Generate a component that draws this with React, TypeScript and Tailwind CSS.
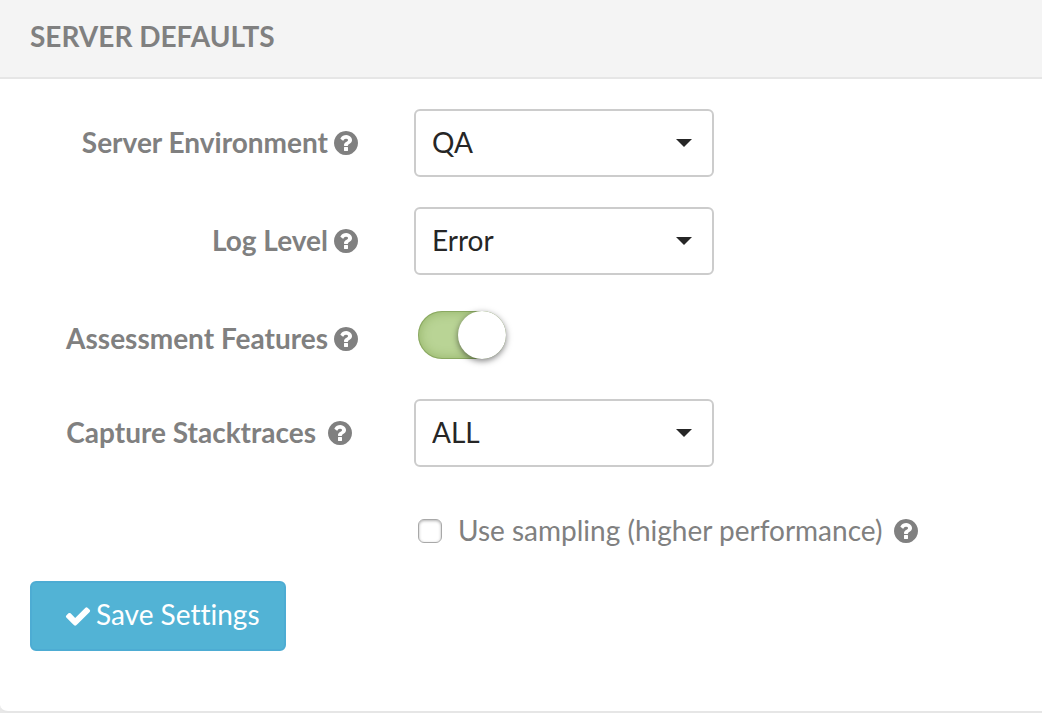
import React, { useState } from "react";

function HelpIcon() {
  return (
    <svg viewBox="128 128 1536 1536" className="size-6 shrink-0" fill="currentColor" aria-hidden="true">
      <path d="M1024 1376v-192q0-14-9-23t-23-9h-192q-14 0-23 9t-9 23v192q0 14 9 23t23 9h192q14 0 23-9t9-23zm256-672q0-88-55.5-163t-138.5-116-170-41q-243 0-371 213-15 24 8 42l132 100q7 6 19 6 16 0 25-12 53-68 86-92 34-24 86-24 48 0 85.5 26t37.5 59q0 38-20 61t-68 45q-63 28-115.5 86.5t-52.5 125.5v36q0 14 9 23t23 9h192q14 0 23-9t9-23q0-19 21.5-49.5t54.5-49.5q32-18 49-28.5t46-35 44.5-48 28-60.5 12.5-81zm384 192q0 209-103 385.5t-279.5 279.5-385.5 103-385.5-103-279.5-279.5-103-385.5 103-385.5 279.5-279.5 385.5-103 385.5 103 279.5 279.5 103 385.5z" />
    </svg>
  );
}

function CheckIcon() {
  return (
    <svg viewBox="0 0 1792 1792" className="size-7 shrink-0" fill="currentColor" aria-hidden="true">
      <path d="M1671 566q0 40-28 68l-724 724-136 136q-28 28-68 28t-68-28l-136-136-362-362q-28-28-28-68t28-68l136-136q28-28 68-28t68 28l294 295 656-657q28-28 68-28t68 28l136 136q28 28 28 68z" />
    </svg>
  );
}

function LabelCell({ htmlFor, text, spaced = false }: { htmlFor: string; text: string; spaced?: boolean }) {
  return (
    <div
      className={
        spaced
          ? "flex h-[68px] w-[328px] shrink-0 items-center justify-end gap-3 pr-1.5"
          : "flex h-[68px] w-[328px] shrink-0 items-center justify-end gap-1.5"
      }
    >
      <label htmlFor={htmlFor} className="pb-0.5 font-bold whitespace-nowrap">
        {text}
      </label>
      <HelpIcon />
    </div>
  );
}

function SelectBox({ id, options }: { id: string; options: string[] }) {
  return (
    <div className="relative w-[300px]">
      <select
        id={id}
        className="h-[68px] w-full appearance-none rounded-md border-2 border-[#cccccc] bg-white pr-12 pb-0.5 pl-4 text-[#262626]"
      >
        {options.map((option) => (
          <option key={option}>{option}</option>
        ))}
      </select>
      <svg
        viewBox="0 0 16 8"
        className="pointer-events-none absolute top-[30px] right-[22px] h-2 w-4"
        fill="#262626"
        aria-hidden="true"
      >
        <path d="M0 0h16L8 8z" />
      </svg>
    </div>
  );
}

export default function App() {
  const [assess, setAssess] = useState(true);
  const [sampling, setSampling] = useState(false);

  return (
    <div className="bg-[#e8e8e8] font-['Lato',sans-serif] text-[28px] leading-9 text-[#808080] [font-variant-ligatures:none]">
      <section className="rounded-bl-lg border-b-2 border-[#e6e6e6] bg-white">
        <header className="border-b-2 border-[#e6e6e6] bg-[#f4f4f4] px-[30px] pt-[18px] pb-[23px]">
          <h1 className="font-bold">SERVER DEFAULTS</h1>
        </header>
        <form className="px-[30px] pt-[30px] pb-[60px]" onSubmit={(e) => e.preventDefault()}>
          <div className="flex flex-col gap-[30px]">
            <div className="flex gap-14">
              <LabelCell htmlFor="environment" text="Server Environment" />
              <SelectBox id="environment" options={["QA", "Development", "Production"]} />
            </div>
            <div className="flex gap-14">
              <LabelCell htmlFor="log-level" text="Log Level" />
              <SelectBox id="log-level" options={["Error", "Warn", "Info", "Debug", "Trace"]} />
            </div>
            <div className="flex h-16 gap-14">
              <LabelCell htmlFor="assessment" text="Assessment Features" />
              <div className="pt-1.5 pl-1">
                <input
                  id="assessment"
                  type="checkbox"
                  role="switch"
                  checked={assess}
                  onChange={(e) => setAssess(e.target.checked)}
                  className="flex h-12 w-[88px] appearance-none rounded-full bg-[#cccccc] shadow-[inset_0_0_12px_rgba(80,120,20,0.4),inset_0_0_0_1px_rgba(80,110,40,0.3)] before:size-12 before:rounded-full before:bg-white before:shadow-[0_2px_6px_rgba(0,0,0,0.5)] checked:justify-end checked:bg-[#b9d495]"
                />
              </div>
            </div>
            <div className="flex gap-14">
              <LabelCell htmlFor="stacktraces" text="Capture Stacktraces" spaced />
              <SelectBox id="stacktraces" options={["ALL", "SOME", "NONE"]} />
            </div>
            <div className="ml-[388px] flex h-[68px] items-center">
              <input
                id="sampling"
                type="checkbox"
                checked={sampling}
                onChange={(e) => setSampling(e.target.checked)}
                className="size-6 shrink-0 appearance-none rounded-md border border-[#a8a8a8] bg-white shadow-[inset_0_1px_3px_rgba(0,0,0,0.3)] checked:bg-[#52b3d5]"
              />
              <label htmlFor="sampling" className="mr-3 ml-4 pb-0.5 whitespace-nowrap">
                Use sampling (higher performance)
              </label>
              <HelpIcon />
            </div>
          </div>
          <button
            type="submit"
            className="mt-4 flex h-[70px] items-center gap-1 rounded-md border-2 border-[#4dacd3] bg-[#52b3d5] px-6 pl-8 text-white"
          >
            <CheckIcon />
            <span className="pb-1">Save Settings</span>
          </button>
        </form>
      </section>
    </div>
  );
}
